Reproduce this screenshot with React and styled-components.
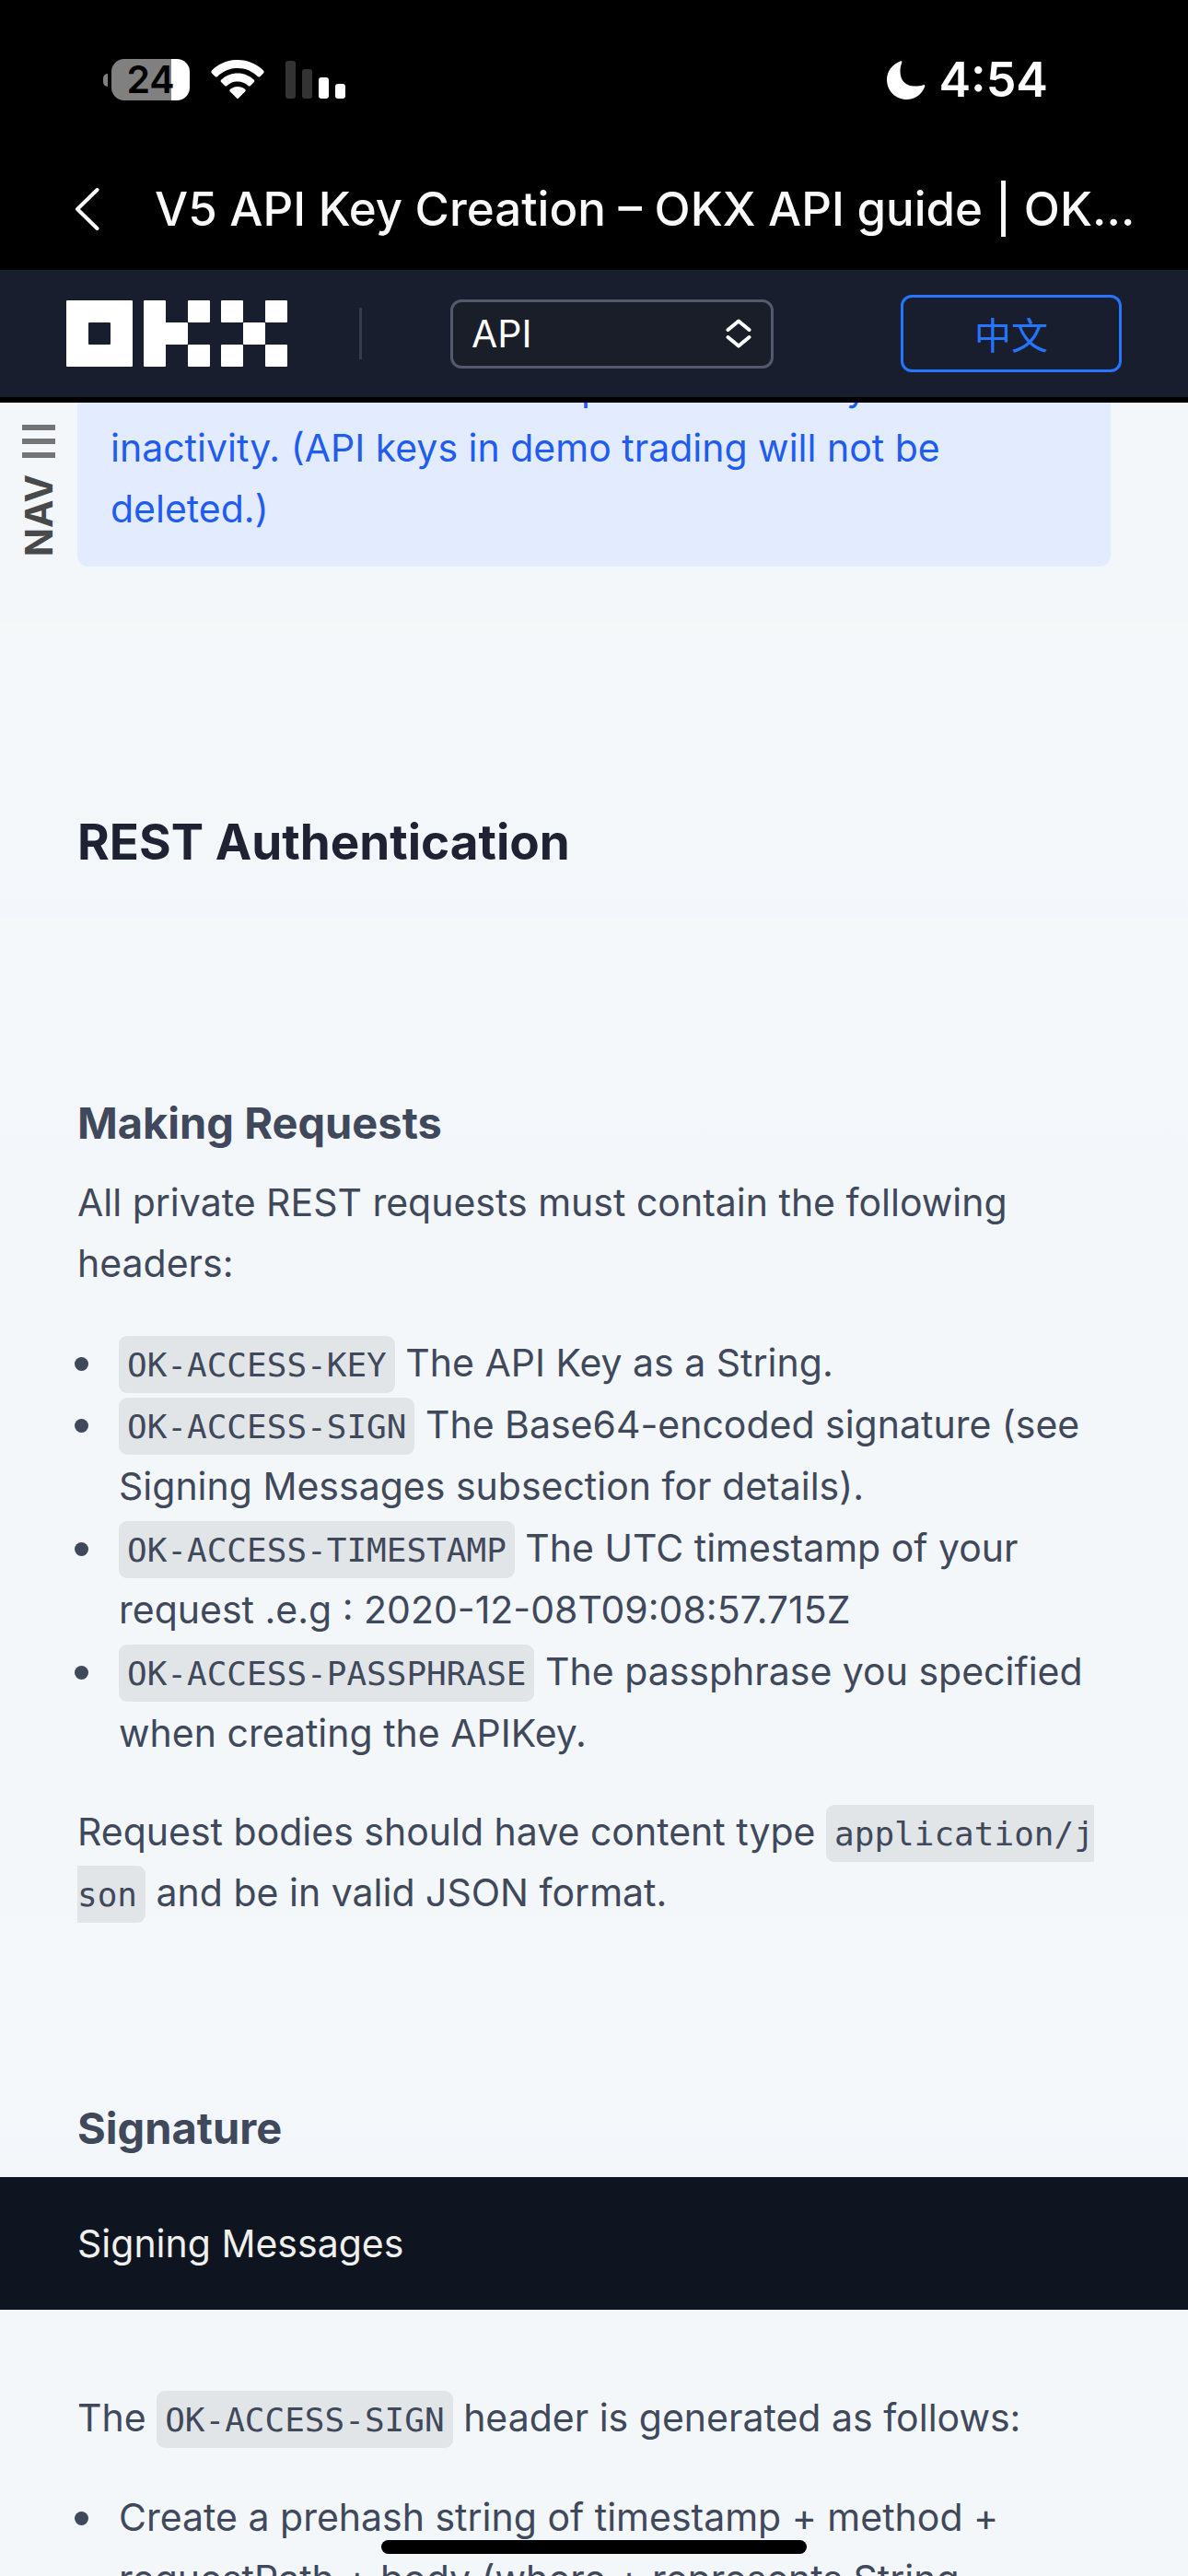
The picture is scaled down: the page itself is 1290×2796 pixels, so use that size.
import React from "react";
import styled, { createGlobalStyle } from "styled-components";

const GlobalStyle = createGlobalStyle`
  *, *::before, *::after { box-sizing: border-box; }
  html, body { margin: 0; padding: 0; background: #f3f7fa; }
  body, button, select { font-family: Inter, "Liberation Sans", "Noto Sans CJK SC", sans-serif; }
`;

const Screen = styled.div`
  position: relative;
  display: flex;
  flex-direction: column;
  height: 100vh;
  overflow: hidden;
  background: #f3f7fa;
  color: #40485b;
`;

const StatusBar = styled.div`
  display: flex;
  flex: none;
  align-items: center;
  justify-content: space-between;
  height: 173px;
  padding: 0 152px 0 112px;
  background: #000;
  color: #fff;
`;

const StatusGroup = styled.div`
  display: flex;
  align-items: center;
  gap: ${(p) => p.$gap}px;
`;

const Clock = styled.time`
  font-size: 52px;
  line-height: 60px;
  font-weight: 600;
`;

const Battery = styled.div`
  display: flex;
  align-items: center;
  gap: 4px;
`;

const BatteryNub = styled.span`
  width: 5px;
  height: 14px;
  border-radius: 5px 0 0 5px;
  background: #808080;
`;

const BatteryBody = styled.span`
  width: 85px;
  height: 45px;
  border-radius: 14px;
  background: linear-gradient(to right, #808080 65px, #fff 65px);
  color: #000;
  font-size: 41px;
  line-height: 45px;
  font-weight: 600;
  text-align: center;
`;

const TitleBar = styled.div`
  display: flex;
  flex: none;
  align-items: center;
  gap: 60px;
  height: 120px;
  padding: 0 56px 12px 80px;
  background: #000;
  color: #fafafa;
`;

const BackButton = styled.button`
  display: flex;
  flex: none;
  padding: 0;
  border: 0;
  background: none;
  color: inherit;
`;

const PageTitle = styled.div`
  flex: 1;
  min-width: 0;
  overflow: hidden;
  white-space: nowrap;
  text-overflow: ellipsis;
  font-size: 51px;
  line-height: 66px;
  font-weight: 500;
`;

const SiteHeader = styled.header`
  display: flex;
  flex: none;
  align-items: center;
  height: 144px;
  padding: 0 72px;
  border-bottom: 6px solid #000;
  background: #191e2f;
  z-index: 1;
`;

const LogoLink = styled.a`
  display: flex;
`;

const Divider = styled.span`
  width: 3px;
  height: 56px;
  margin: 0 96px 0 78px;
  background: #363c4e;
`;

const SelectBox = styled.label`
  display: grid;
  align-items: center;
  width: 351px;

  & > * { grid-area: 1 / 1; }
  & > svg { justify-self: end; margin-right: 24px; pointer-events: none; }
`;

const Select = styled.select`
  width: 100%;
  height: 75px;
  padding: 0 20px;
  appearance: none;
  border: 3px solid #535a6d;
  border-radius: 12px;
  background: #191e29;
  color: #fff;
  font-size: 41px;
`;

const LanguageButton = styled.button`
  width: 240px;
  height: 84px;
  margin-left: auto;
  padding: 0;
  border: 3px solid #2575ff;
  border-radius: 12px;
  background: transparent;
  color: #2575ff;
  font-family: "Noto Sans CJK SC", sans-serif;
  font-size: 40px;
  line-height: 60px;
`;

const Main = styled.main`
  position: relative;
  flex: 1;
  min-height: 0;
  overflow: hidden;
`;

const NavButton = styled.button`
  position: absolute;
  top: 24px;
  left: 24px;
  display: flex;
  flex-direction: column;
  align-items: center;
  gap: 18px;
  width: 36px;
  padding: 0;
  border: 0;
  background: none;
  color: #48494a;
`;

const NavText = styled.span`
  writing-mode: vertical-rl;
  transform: rotate(180deg);
  font-size: 41px;
  line-height: 36px;
  font-weight: 700;
`;

/* The article is scrolled so that its first lines sit under the site header. */
const Article = styled.article`
  margin-top: -80px;
  font-size: 41px;
  line-height: 66px;
`;

const Callout = styled.aside`
  margin: 0 84px 62px;
  padding: 30px 36px;
  border-radius: 12px;
  background: #e3ebff;
  color: #1f5cf0;
`;

const H2 = styled.h2`
  margin: 0;
  padding: 204px 84px 49px;
  background: linear-gradient(#f4f8f9, #f3f7fb);
  color: #1e2232;
  font-size: 53px;
  line-height: 66px;
  font-weight: 700;
`;

const H3 = styled.h3`
  margin: 0 0 23px;
  padding: 193px 84px 0;
  background: linear-gradient(#f4f8f9, #f3f7fb);
  font-size: 47px;
  line-height: 60px;
  font-weight: 700;
`;

const Paragraph = styled.p`
  margin: 0;
  padding: 0 84px;
`;

const List = styled.ul`
  margin: 42px 84px 40px;
  padding: 0 0 0 45px;
  line-height: 67px;
  list-style: none;
`;

const Item = styled.li`
  &::before {
    content: "";
    display: inline-block;
    width: 15px;
    height: 15px;
    margin: 0 33px 6px -48px;
    border-radius: 50%;
    background: currentColor;
  }
`;

const Code = styled.code`
  padding: 11px 9px 10px;
  border-radius: 9px;
  background: #e1e5e8;
  font-family: "DejaVu Sans Mono", monospace;
  font-size: 36px;
  line-height: 1;
  word-break: break-all;
`;

const DarkNote = styled.p`
  margin: 0 0 84px;
  padding: 39px 84px;
  background: #0f1520;
  color: #f0f0ee;
`;

const HomeIndicator = styled.div`
  position: absolute;
  bottom: 24px;
  left: 50%;
  width: 462px;
  height: 15px;
  margin-left: -231px;
  border-radius: 8px;
  background: #000;
  z-index: 2;
`;

function Wifi() {
  return (
    <svg width="58" height="43" viewBox="0 0 58 43" fill="#fff" aria-hidden="true">
      <path d="M29 0C18 0 8 4.500 1 11.500Q-.3 13 1 14.400L4.500 18Q5.800 19.200 7.200 18C13 12.300 20.500 9 29 9s16 3.300 21.800 9Q52.200 19.200 53.500 18L57 14.400Q58.300 13 57 11.500C50 4.500 40 0 29 0Z" />
      <path d="M29 14.500C22 14.500 16 17.200 11.300 21.500Q10 23 11.300 24.300L15 28Q16.200 29.200 17.600 28C20.600 25.200 24.600 23.500 29 23.500s8.400 1.700 11.400 4.500Q41.800 29.200 43 28L46.700 24.300Q48 23 46.700 21.500C42 17.200 36 14.500 29 14.500Z" />
      <path d="M29 29C26 29 23.200 30 21 31.800Q19.600 33.200 21 34.600L28 41.600Q29 42.600 30 41.600L37 34.600Q38.400 33.200 37 31.800C34.800 30 32 29 29 29Z" />
    </svg>
  );
}

function Signal() {
  return (
    <svg width="65" height="41" viewBox="0 0 65 41" aria-hidden="true">
      <rect x="0" y="0" width="11" height="41" rx="3" fill="#333" />
      <rect x="18" y="9" width="11" height="32" rx="3" fill="#333" />
      <rect x="36" y="18" width="11" height="23" rx="3" fill="#fff" />
      <rect x="54" y="25" width="11" height="16" rx="3" fill="#fff" />
    </svg>
  );
}

function Moon() {
  return (
    <svg width="42" height="42" viewBox="0 0 42 42" fill="#fff" aria-hidden="true">
      <path d="M14.500 .5C16 0 16.800 .8 16.200 2.200C15 5 14.500 8 14.500 11.500C14.500 21.500 20.500 27.500 30.500 27.500C34 27.500 37 27.200 39.500 26.200C41 25.700 41.700 26.500 41.200 28C38 36.500 30.500 42 21.500 42C9.500 42 0 32.500 0 20.500C0 11.500 5.800 3.800 14.500 .5Z" />
    </svg>
  );
}

function Logo() {
  return (
    <svg width="240" height="72" viewBox="0 0 240 72" fill="#fff" role="img" aria-label="OKX">
      <path fillRule="evenodd" d="M1 0H71Q72 0 72 1V71Q72 72 71 72H1Q0 72 0 71V1Q0 0 1 0ZM25 24Q24 24 24 25V47Q24 48 25 48H47Q48 48 48 47V25Q48 24 47 24Z" />
      <path d="M85 0H107Q108 0 108 1V24H131Q132 24 132 25V47Q132 48 131 48H108V71Q108 72 107 72H85Q84 72 84 71V1Q84 0 85 0Z" />
      <rect x="132" y="0" width="24" height="24" rx="1" />
      <rect x="132" y="48" width="24" height="24" rx="1" />
      <rect x="168" y="0" width="24" height="24" rx="1" />
      <rect x="216" y="0" width="24" height="24" rx="1" />
      <rect x="192" y="24" width="24" height="24" rx="1" />
      <rect x="168" y="48" width="24" height="24" rx="1" />
      <rect x="216" y="48" width="24" height="24" rx="1" />
    </svg>
  );
}

const headers = [
  ["OK-ACCESS-KEY", "The API Key as a String."],
  ["OK-ACCESS-SIGN", "The Base64-encoded signature (see Signing Messages subsection for details)."],
  ["OK-ACCESS-TIMESTAMP", "The UTC timestamp of your request .e.g : 2020-12-08T09:08:57.715Z"],
  ["OK-ACCESS-PASSPHRASE", "The passphrase you specified when creating the APIKey."],
];

export default function App() {
  return (
    <Screen>
      <GlobalStyle />
      <StatusBar>
        <StatusGroup $gap={23}>
          <Battery>
            <BatteryNub />
            <BatteryBody>24</BatteryBody>
          </Battery>
          <Wifi />
          <Signal />
        </StatusGroup>
        <StatusGroup $gap={14}>
          <Moon />
          <Clock>4:54</Clock>
        </StatusGroup>
      </StatusBar>
      <TitleBar>
        <BackButton type="button" aria-label="Back">
          <svg width="28" height="48" viewBox="0 0 28 48" fill="none" stroke="currentColor" strokeWidth="4" strokeLinecap="round" strokeLinejoin="round">
            <path d="M25.500 3L4 24L25.500 45" />
          </svg>
        </BackButton>
        <PageTitle>V5 API Key Creation – OKX API guide | OKX technical support</PageTitle>
      </TitleBar>
      <SiteHeader>
        <LogoLink href="#"><Logo /></LogoLink>
        <Divider />
        <SelectBox>
          <Select aria-label="Section" defaultValue="API">
            <option>API</option>
          </Select>
          <svg width="28" height="32" viewBox="0 0 28 32" fill="none" stroke="#fff" strokeWidth="4" strokeLinecap="round" strokeLinejoin="round">
            <path d="M2.500 12L14 2.500L25.500 12M2.500 20L14 29.500L25.500 20" />
          </svg>
        </SelectBox>
        <LanguageButton type="button">中文</LanguageButton>
      </SiteHeader>
      <Main>
        <Article>
          <Callout>
            linked to IP address will expire after 14 days of inactivity. (API keys in demo trading will not be deleted.)
          </Callout>
          <H2>REST Authentication</H2>
          <H3>Making Requests</H3>
          <Paragraph>All private REST requests must contain the following headers:</Paragraph>
          <List>
            {headers.map(([name, text]) => (
              <Item key={name}><Code>{name}</Code> {text}</Item>
            ))}
          </List>
          <Paragraph>
            Request bodies should have content type <Code>application/json</Code> and be in valid JSON format.
          </Paragraph>
          <H3>Signature</H3>
          <DarkNote>Signing Messages</DarkNote>
          <Paragraph>The <Code>OK-ACCESS-SIGN</Code> header is generated as follows:</Paragraph>
          <List>
            <Item>Create a prehash string of timestamp + method + requestPath + body (where + represents String concatenation).</Item>
          </List>
        </Article>
        <NavButton type="button">
          <svg width="36" height="36" viewBox="0 0 36 36" fill="#737475" aria-hidden="true">
            <path d="M0 0H36V6H0ZM0 15H36V21H0ZM0 30H36V36H0Z" />
          </svg>
          <NavText>NAV</NavText>
        </NavButton>
      </Main>
      <HomeIndicator />
    </Screen>
  );
}
